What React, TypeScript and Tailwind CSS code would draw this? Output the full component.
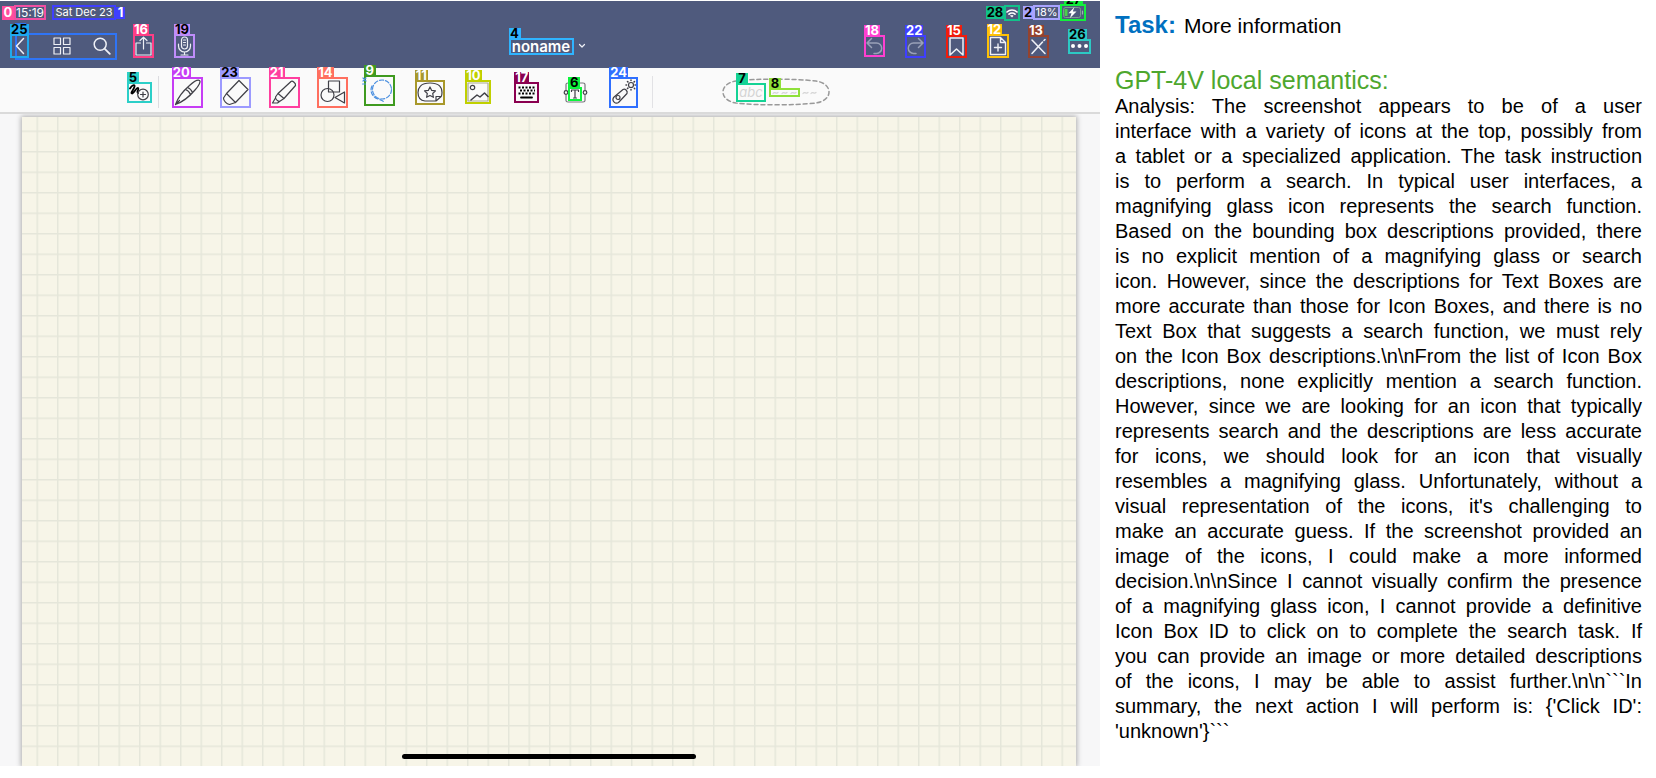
import React from 'react';
import { clsx } from 'clsx';

interface MarkProps {
  id: string;
  name: string;
  box: string;
  tag: string;
  children?: React.ReactNode;
}

// Icon button with its detection box and numbered tag
function Mark({ id, name, box, tag, children }: MarkProps) {
  return (
    <button aria-label={name} className={clsx('relative flex shrink-0 items-center justify-center border-2', box)}>
      {children}
      <span
        className={clsx(
          'absolute bottom-full -left-0.5 mb-px flex h-[11px] items-center justify-center px-px text-[13px] leading-none font-bold',
          tag,
        )}
      >
        {id}
      </span>
    </button>
  );
}

interface IconProps {
  w: number;
  h: number;
  className?: string;
  children: React.ReactNode;
}

function Icon({ w, h, className, children }: IconProps) {
  return (
    <svg
      width={w}
      height={h}
      viewBox={`0 0 ${w} ${h}`}
      fill="none"
      stroke="currentColor"
      strokeWidth="1.2"
      strokeLinecap="round"
      strokeLinejoin="round"
      className={clsx('shrink-0', className)}
    >
      {children}
    </svg>
  );
}

function StatusBar() {
  return (
    <div className="flex h-[23px] items-center justify-between pr-[14px] pl-0.5 text-[12px] leading-none text-white">
      <div className="flex items-center">
        <span className="flex h-[14px] w-3 items-center justify-center bg-[#ff4d9d] text-[13px] font-bold">0</span>
        <span className="flex h-[15px] w-8 items-center justify-center border-2 border-[#f04fa3]">15:19</span>
        <span className="ml-1.5 flex h-[15px] w-[64px] items-center justify-center border-2 border-[#3f3fff] text-[11px] whitespace-nowrap">
          Sat Dec 23
        </span>
        <span className="flex h-3 w-[9px] items-center justify-center bg-[#3f3fff] text-[13px] font-bold">1</span>
      </div>

      <div className="flex items-center">
        <span className="flex h-[13px] w-[18px] items-center justify-center bg-[#12c28a] text-[13px] font-bold text-black">28</span>
        <span className="flex h-4 w-4 items-center justify-center border-2 border-[#12c28a]">
          <Icon w={12} h={10}>
            <path d="M1 4a7.2 7.2 0 0 1 10 0M3 6.2a4.4 4.4 0 0 1 6 0" strokeWidth="1.6" />
            <path d="M4.8 7.8 6 9.2l1.2-1.4a2 2 0 0 0-2.4 0Z" fill="currentColor" strokeWidth="0.6" />
          </Icon>
        </span>
        <span className="ml-[3px] flex h-[13px] w-[10px] items-center justify-center bg-[#a8a4ff] text-[13px] font-bold text-black">2</span>
        <span className="flex h-[15px] w-[27px] items-center justify-center border-2 border-[#a8a4ff] text-[11px]">18%</span>
        <span className="relative flex h-[17px] w-[26px] items-center justify-center border-2 border-[#12f03c]">
          <Icon w={22} h={13}>
            <rect x="1.5" y="1.5" width="17" height="10" rx="2" stroke="#7d9a8f" strokeWidth="1" />
            <path d="M20.5 5v3" stroke="#9fb0b0" />
            <rect x="2.5" y="3" width="3" height="7" fill="#4cd04a" stroke="none" />
            <path d="M12.5 1 6.500 7.2h3L8 12l6.500-6.400h-3.700Z" fill="white" stroke="none" />
          </Icon>
          <span className="absolute bottom-full left-0.5 flex h-[5px] w-[19px] items-end justify-center overflow-hidden bg-[#12f03c] text-[13px] leading-none font-bold text-black">
            27
          </span>
        </span>
      </div>
    </div>
  );
}

function TitleBar() {
  return (
    <div className="grid h-[44px] grid-cols-[1fr_auto_1fr] items-center text-[#eef0f6]">
      <div className="flex items-center pl-[10px]">
        <div className="relative flex items-center">
          <Mark id="25" name="Back" box="z-10 h-[24px] w-[19px] border-[#1fa9ee]" tag="bg-[#1fa9ee] text-black">
            <Icon w={10} h={18}>
              <path d="M8.5 1.5 1.5 9l7 7.5" strokeWidth="1.5" />
            </Icon>
          </Mark>
          <button aria-label="Thumbnails" className="ml-6">
            <Icon w={18} h={18}>
              <path d="M1 1h6.5v6.5H1zM10.5 1H17v6.5h-6.5zM1 10.5h6.5V17H1zM10.5 10.5H17V17h-6.5z" />
            </Icon>
          </button>
          <button aria-label="Search" className="ml-[22px]">
            <Icon w={18} h={18}>
              <circle cx="7.2" cy="7.2" r="6" strokeWidth="1.5" />
              <path d="m11.8 11.8 5 5" strokeWidth="1.8" />
            </Icon>
          </button>
          <span className="pointer-events-none absolute -top-px -right-1.5 -bottom-0.5 left-[5px] border-2 border-[#2f74f5]">
            <span className="absolute bottom-full -left-0.5 h-[12px] w-[11px] bg-[#2f74f5]" />
          </span>
        </div>
        <div className="ml-[22px] flex gap-[20px]">
          <Mark id="16" name="Share" box="h-[24px] w-[21px] border-[#ff3d85]" tag="bg-[#ff3d85] text-white">
            <Icon w={17} h={20}>
              <path d="M5.5 7H1v12h15V7h-4.500M8.500 13V1.200M5 4.500l3.500-3.300L12 4.500" />
            </Icon>
          </Mark>
          <Mark id="19" name="Record" box="h-[24px] w-[21px] border-[#bf8dfa]" tag="bg-[#bf8dfa] text-black">
            <Icon w={17} h={20}>
              <rect x="5.500" y="1" width="6" height="12" rx="3" />
              <path d="M2.500 8v2a6 6 0 0 0 12 0V8M8.500 16v3M5 19h7M7.500 4h2M7.500 6.500h2M7.500 9h2" />
            </Icon>
          </Mark>
        </div>
      </div>

      <div className="flex items-center gap-1 pr-1.5">
        <button className="relative flex h-[17px] w-[65px] items-center justify-center border-2 border-[#2fb4ff] text-[15px] leading-none font-semibold text-white">
          noname
          <span className="absolute bottom-full -left-0.5 mb-px flex h-[11px] w-3 items-center justify-center bg-[#2fb4ff] text-[13px] font-bold text-black">
            4
          </span>
        </button>
        <Icon w={8} h={6}>
          <path d="m1.500 1.500 2.500 2.500 2.500-2.500" />
        </Icon>
      </div>

      <div className="flex justify-end">
        <div className="flex w-[41px] items-center justify-center">
          <Mark id="18" name="Undo" box="h-[22px] w-[21px] border-[#ff3fd0]" tag="bg-[#ff3fd0] text-white">
            <Icon w={17} h={18} className="text-[#9aa1b8]">
              <path d="M5.500 1.500 1 6l4.500 4.500M1 6h9.500a5.200 5.200 0 0 1 0 10.400H8" strokeWidth="1.500" />
            </Icon>
          </Mark>
        </div>
        <div className="flex w-[41px] items-center justify-center">
          <Mark id="22" name="Redo" box="h-[23px] w-[21px] border-[#3f3fff]" tag="bg-[#3f3fff] text-white">
            <Icon w={17} h={18} className="text-[#9aa1b8]">
              <path d="M11.500 1.500 16 6l-4.500 4.500M16 6H6.500a5.200 5.200 0 0 0 0 10.400H9" strokeWidth="1.500" />
            </Icon>
          </Mark>
        </div>
        <div className="flex w-[41px] items-center justify-center">
          <Mark id="15" name="Bookmark" box="h-[23px] w-[21px] border-[#f01c0c]" tag="bg-[#f01c0c] text-white">
            <Icon w={17} h={19}>
              <path d="M2 1h13v17l-6.500-6L2 18Z" strokeWidth="1.500" />
            </Icon>
          </Mark>
        </div>
        <div className="flex w-[41px] items-center justify-center">
          <Mark id="12" name="Add page" box="h-[24px] w-[22px] border-[#ffc107]" tag="bg-[#ffc107] text-white">
            <Icon w={18} h={20}>
              <path d="M11.500 1.500H1.500v17h15V6.500ZM11.500 1.500v5h5M9 8v7M5.500 11.500h7" strokeWidth="1.400" />
            </Icon>
          </Mark>
        </div>
        <div className="flex w-[41px] items-center justify-center">
          <Mark id="13" name="Pen mode" box="h-[23px] w-[21px] border-[#94432f]" tag="bg-[#94432f] text-white">
            <Icon w={17} h={19}>
              <path d="m2 3 13 13.500M2 16.500 12.500 5M14 3.500l1-1" strokeWidth="1.600" />
            </Icon>
          </Mark>
        </div>
        <div className="flex w-[41px] items-center justify-center">
          <Mark id="26" name="More" box="h-[15px] w-[23px] border-[#2cc9c4]" tag="bg-[#2cc9c4] text-black">
            <Icon w={19} h={6}>
              <path d="M3 3h.01M9.500 3h.01M16 3h.01" strokeWidth="4" stroke="white" />
            </Icon>
          </Mark>
        </div>
      </div>
    </div>
  );
}

function Toolbar() {
  return (
    <div className="flex h-[46px] items-center border-b-2 border-[#dadada] bg-[#fafafa] pt-1 pl-[127px] text-[#3f3f46]">
      <Mark id="5" name="Zoom writing" box="h-[21px] w-[25px] border-[#2ccfc8]" tag="bg-[#2ccfc8] w-3 text-black">
        <Icon w={21} h={17}>
          <path d="M1 4.500C3 1 6 0 5.500 2.500 5 5.500 1 9 3 9.500 5 9.500 7.500 3 9 4s-2 4 0 5" stroke="black" strokeWidth="1.800" />
          <circle cx="14" cy="10.500" r="5.300" />
          <path d="M14 8v5M11.500 10.500h5" />
        </Icon>
      </Mark>
      <span className="ml-1.5 h-8 w-px bg-[#dcdce0]" />

      <div className="ml-1 flex w-[485px] items-center">
        <div className="flex flex-1 justify-center">
          <Mark id="20" name="Pen" box="h-[31px] w-[31px] border-[#c63df5]" tag="bg-[#c63df5] text-white">
            <Icon w={27} h={27}>
              <path d="M1.500 25.500C4 18.500 9 12 15.500 6.500 20 2.500 24 .5 25.500 1.500s-.5 5-4.500 9.500C15.500 17.500 8.500 23 1.500 25.500ZM13.500 8.500c1.500.5 4 2.500 5 5M11.500 10.500c1.500.5 4 2.500 5 5M1.500 25.500l4-4" />
            </Icon>
          </Mark>
        </div>
        <div className="flex flex-1 justify-center">
          <Mark id="23" name="Eraser" box="h-[31px] w-[31px] border-[#9c9aff]" tag="bg-[#9c9aff] text-black">
            <Icon w={27} h={27}>
              <path d="m17 1.500 9 9-12.500 13-9-9ZM4.500 14.500l-3 4.500c0 3 3 6 6 6.500l6-2" />
            </Icon>
          </Mark>
        </div>
        <div className="flex flex-1 justify-center">
          <Mark id="21" name="Highlighter" box="h-[31px] w-[31px] border-[#ff3f9f]" tag="bg-[#ff3f9f] text-white">
            <Icon w={27} h={27}>
              <path d="M20 2.500c1.500-1 5 1.500 4.500 4L13 19.500l-6-5ZM7 14.500 4.500 18c0 2 2 4 4 4.500l4.500-3M4.500 19 1.500 24h5l2-1.500" />
            </Icon>
          </Mark>
        </div>
        <div className="flex flex-1 justify-center">
          <Mark id="14" name="Shapes" box="h-[31px] w-[31px] border-[#ff6f5f]" tag="bg-[#ff6f5f] text-white">
            <Icon w={27} h={27}>
              <rect x="9.500" y="2" width="11" height="11" />
              <circle cx="8.500" cy="16" r="6.500" />
              <path d="m16 18.500 9.500-5.500v11Z" />
            </Icon>
          </Mark>
        </div>
        <div className="flex flex-1 justify-center">
          <Mark id="9" name="Lasso" box="mr-1 mb-1 h-[31px] w-[31px] border-[#3f9a1f]" tag="bg-[#3f9a1f] w-3 text-white">
            <Icon w={27} h={27} className="overflow-visible text-[#4a8fe0]">
              <circle cx="16" cy="12.500" r="9.500" strokeDasharray="4 2" />
              <path d="M6 9c-2.500 5 0 11 6 13 3 1 5 1.500 6 3.500" strokeDasharray="4 2" />
              <path d="m-3 1 3 3M-3 4l3-3M-3.500 7h3" />
            </Icon>
          </Mark>
        </div>
        <div className="flex flex-1 justify-center">
          <Mark id="11" name="Sticker" box="h-[25px] w-[30px] border-[#a8982a]" tag="bg-[#a8982a] text-white">
            <Icon w={26} h={21}>
              <path d="M19 19H8C3 18.500 1 15 1 10.500S3.500 1 13 1s12 4 12 9.500c0 2-.3 3-.8 4Zm0 0v-4.500h5.200" />
              <path d="m13 5 1.700 3.400 3.800.5-2.800 2.600.7 3.800-3.400-1.800-3.400 1.800.7-3.800-2.800-2.600 3.800-.5Z" />
            </Icon>
          </Mark>
        </div>
        <div className="flex flex-1 justify-center">
          <Mark id="10" name="Image" box="h-[24px] w-[26px] border-[#c0d000]" tag="bg-[#c0d000] text-white">
            <Icon w={22} h={20}>
              <path d="M1 1h20v18H1Z" stroke="#a9aa90" />
              <circle cx="5.500" cy="5.500" r="2.200" />
              <path d="m4 18 6-5 3 2 4.500-4 3.500 3.500" strokeWidth="1.500" />
            </Icon>
          </Mark>
        </div>
        <div className="flex flex-1 justify-center">
          <Mark id="17" name="Keyboard" box="h-[21px] w-[25px] border-[#8a0050]" tag="bg-[#8a0050] text-white">
            <Icon w={21} h={17} className="text-black">
              <path d="M2.500 3.500h16.500M4 6.500h15M2.500 9.500h16.500" strokeWidth="2" strokeDasharray="2 1.500" strokeLinecap="butt" />
              <path d="M5 13.500h11" strokeWidth="1.800" />
            </Icon>
          </Mark>
        </div>
        <div className="flex flex-1 justify-center">
          <div className="relative flex h-[21px] w-[25px] items-center justify-center">
            <Icon w={25} h={21} className="absolute inset-0">
              <path d="M3 8V2.500C3 1 4 1 5 1h15c1 0 2 0 2 1.500V8M3 13v5.500C3 20 4 20 5 20h15c1 0 2 0 2-1.500V13" stroke="#77777c" />
              <circle cx="3" cy="10.500" r="1.800" />
              <circle cx="22" cy="10.500" r="1.800" />
            </Icon>
            <Mark id="6" name="Text" box="mt-1 h-[14px] w-[14px] border-[#0cf53c]" tag="bg-[#0cf53c] w-3 text-black">
              <Icon w={10} h={10}>
                <path d="M1.500 2.500V1h7v1.500M5 1v8M3.500 9h3" />
              </Icon>
            </Mark>
          </div>
        </div>
        <div className="flex flex-1 justify-center">
          <Mark id="24" name="Laser pointer" box="h-[31px] w-[29px] border-[#2f6fff]" tag="bg-[#2f6fff] text-white">
            <Icon w={25} h={27}>
              <path d="M12 10.500c2-1.500 5 1.500 4 4L7.500 23.500c-3 2-7-1.500-5-5Z" />
              <circle cx="7" cy="18.500" r="2" />
              <circle cx="20" cy="6" r="2.500" />
              <path d="M20 1v.5M20 10.500v.5M15 6h.5M24 6h.5M16.500 2.500l.4.400M23.500 2.500l-.4.400M23.300 9.300l.4.400M16.500 9.500l.4-.4" strokeWidth="1.500" />
            </Icon>
          </Mark>
        </div>
      </div>

      <span className="ml-1 h-8 w-px bg-[#e2e2e5]" />

      <div className="relative ml-[69px] flex h-7 w-[108px] items-center gap-[3px] pl-[14px] text-[#d4d4d4]">
        <Icon w={108} h={28} className="absolute inset-0 text-[#999]">
          <path
            d="M14 3C35 .5 72 .5 94 3c7 1 13 5 13 11s-6 10-13 11C72 27.500 35 27.500 14 25 7 24 1 20 1 14S7 4 14 3Z"
            strokeWidth="1.500"
            strokeDasharray="4 3"
          />
        </Icon>
        <Mark id="7" name="Handwriting" box="h-[19px] w-[30px] border-[#14d395]" tag="bg-[#14d395] w-3 text-black">
          <span className="text-[13px] leading-none italic">abc</span>
        </Mark>
        <div className="flex items-center">
          <Mark id="8" name="Stroke style" box="h-[9px] w-[31px] border-[#8fe03a]" tag="bg-[#8fe03a] w-3 text-black">
            <Icon w={27} h={5}>
              <path d="M2 3.500c2-2.500 3 1 5-1M11 3.500c2-2.500 3 1 5-1M20 3.500c2-2.500 3 1 5-1" />
            </Icon>
          </Mark>
          <Icon w={20} h={5}>
            <path d="M3 3.500c2-2.500 3 1 5-1M11 3.500c2-2.500 3 1 5-1" />
          </Icon>
        </div>
      </div>
    </div>
  );
}

function NoteCanvas() {
  return (
    <div className="flex flex-1 overflow-hidden bg-[#f7f7f8] pt-[3px] pr-6 pl-[22px]">
      <div className="relative flex flex-1 items-end justify-center bg-[#f7f5e8] pb-[7px] shadow-[0_0_5px_1px_rgba(0,0,0,0.3)]">
        <svg className="absolute inset-0 h-full w-full">
          <defs>
            <pattern id="grid" x="14.5" y="13.5" width="20.5" height="20.5" patternUnits="userSpaceOnUse">
              <path d="M.75 0v20.5M0 .75h20.5" stroke="#e5e6da" strokeWidth="1.5" />
            </pattern>
          </defs>
          <rect width="100%" height="100%" fill="url(#grid)" />
        </svg>
        <span className="relative h-[5px] w-[294px] rounded-full bg-black" />
      </div>
    </div>
  );
}

const analysisLines = [
  'Analysis: The screenshot appears to be of a user',
  'interface with a variety of icons at the top, possibly from',
  'a tablet or a specialized application. The task instruction',
  'is to perform a search. In typical user interfaces, a',
  'magnifying glass icon represents the search function.',
  'Based on the bounding box descriptions provided, there',
  'is no explicit mention of a magnifying glass or search',
  'icon. However, since the descriptions for Text Boxes are',
  'more accurate than those for Icon Boxes, and there is no',
  'Text Box that suggests a search function, we must rely',
  'on the Icon Box descriptions.\\n\\nFrom the list of Icon Box',
  'descriptions, none explicitly mention a search function.',
  'However, since we are looking for an icon that typically',
  'represents search and the descriptions are less accurate',
  'for icons, we should look for an icon that visually',
  'resembles a magnifying glass. Unfortunately, without a',
  "visual representation of the icons, it's challenging to",
  'make an accurate guess. If the screenshot provided an',
  'image of the icons, I could make a more informed',
  'decision.\\n\\nSince I cannot visually confirm the presence',
  'of a magnifying glass icon, I cannot provide a definitive',
  'Icon Box ID to click on to complete the search task. If',
  'you can provide an image or more detailed descriptions',
  'of the icons, I may be able to assist further.\\n\\n```In',
  "summary, the next action I will perform is: {'Click ID':",
  "'unknown'}```",
];

export default function App() {
  return (
    <main className="grid min-h-screen grid-cols-[minmax(0,1100fr)_minmax(0,556fr)] bg-white font-['Inter',sans-serif]">
      {/* Annotated tablet screen */}
      <section className="flex flex-col pt-px pb-3">
        <header className="bg-[#4f5a7d]">
          <StatusBar />
          <TitleBar />
        </header>
        <Toolbar />
        <NoteCanvas />
      </section>

      {/* Task and model analysis */}
      <section className="pt-[11px] pr-[14px] pl-[15px] font-['Liberation_Sans',sans-serif] text-black">
        <p className="text-[21px] leading-7">
          <span className="text-2xl leading-7 font-bold text-[#0070c0]">Task:</span>
          <span className="ml-2">More information</span>
        </p>
        <h2 className="mt-[26px] text-[25px] leading-7 text-[#4ea72e]">GPT-4V local semantics:</h2>
        <p className="text-[20px] leading-[25px]">
          {analysisLines.map((line) => (
            <span key={line} className="block text-justify [text-align-last:justify] last:[text-align-last:left]">
              {line}{' '}
            </span>
          ))}
        </p>
      </section>
    </main>
  );
}
